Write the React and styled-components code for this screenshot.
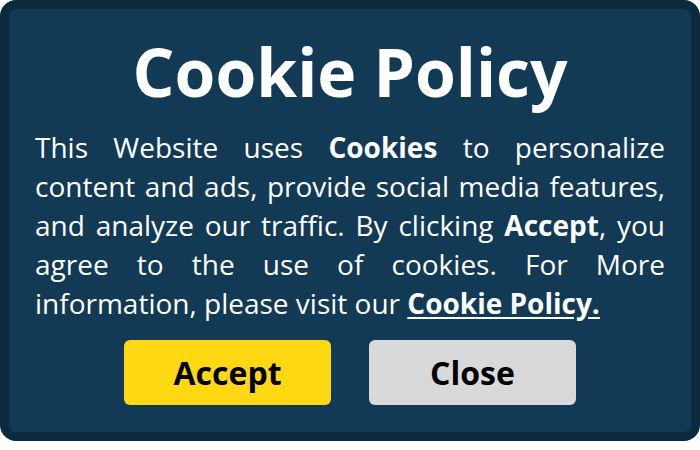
import React from "react";
import styled, { createGlobalStyle } from "styled-components";

const Global = createGlobalStyle`
  html, body { margin: 0; padding: 0; background: #ffffff; }
  body { font-family: "Open Sans", "Noto Sans", sans-serif; }
  * { box-sizing: border-box; }
`;

const Banner = styled.div`
  width: 700px;
  height: 441px;
  border: 9px solid #0b2a3e;
  border-radius: 16px;
  background: #123a54;
  padding: 21px 26px 0;
  display: flex;
  flex-direction: column;
  align-items: stretch;
  color: #ffffff;
`;

const Title = styled.h1`
  margin: 0;
  font-size: 66px;
  font-weight: 700;
  text-align: center;
  line-height: 82px;
`;

const Text = styled.p`
  margin: 16px 0 0;
  font-size: 28px;
  line-height: 39px;
  text-align: justify;
  text-align-last: left;
`;

const Strong = styled.b`
  font-weight: 700;
`;

const PolicyLink = styled.a`
  color: #ffffff;
  font-weight: 700;
  text-decoration: underline;
  text-underline-offset: 3px;
`;

const Buttons = styled.div`
  display: flex;
  justify-content: center;
  gap: 38px;
  margin-top: 17px;
`;

const Button = styled.button`
  width: 207px;
  height: 65px;
  border: none;
  border-radius: 6px;
  background: ${(p) => p.$bg};
  color: #000000;
  font-family: "Open Sans", "Noto Sans", sans-serif;
  font-size: 32px;
  font-weight: 700;
  padding: 0;
  cursor: pointer;
`;

export default function App() {
  return (
    <>
      <Global />
      <Banner>
        <Title>Cookie Policy</Title>
        <Text>
          This Website uses <Strong>Cookies</Strong> to personalize content and
          ads, provide social media features, and analyze our traffic. By
          clicking <Strong>Accept</Strong>, you agree to the use of cookies. For
          More information, please visit our{" "}
          <PolicyLink href="#">Cookie Policy.</PolicyLink>
        </Text>
        <Buttons>
          <Button $bg="#ffd814">Accept</Button>
          <Button $bg="#d9d9d9">Close</Button>
        </Buttons>
      </Banner>
    </>
  );
}
